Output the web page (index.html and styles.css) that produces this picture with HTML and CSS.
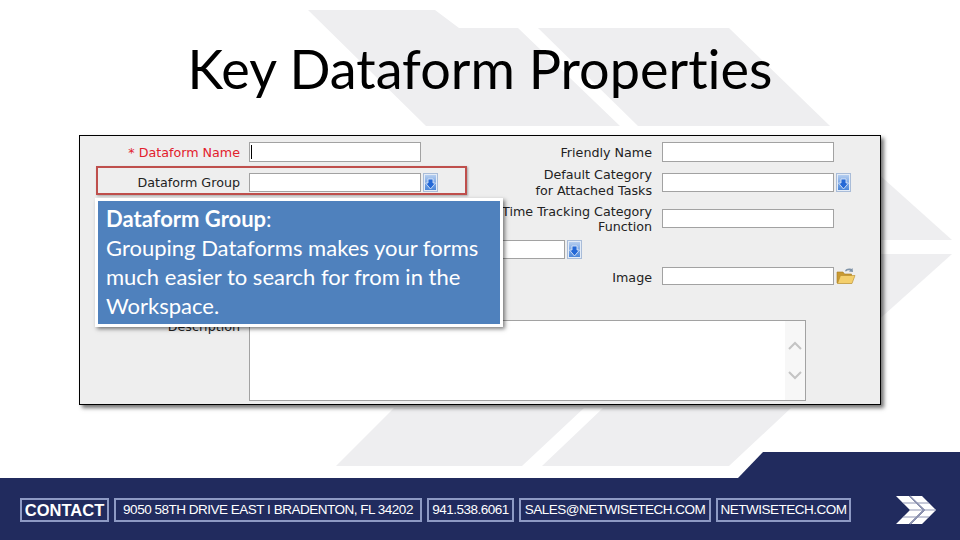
FILE: index.html
```html
<!DOCTYPE html>
<html lang="en">
<head>
  <meta charset="UTF-8">
  <title>Key Dataform Properties</title>
  <link rel="stylesheet" href="styles.css">
</head>
<body>
  <svg class="icon-defs" width="0" height="0">
    <defs>
      <linearGradient id="lookup-fill" x1="0" y1="0" x2="0" y2="1">
        <stop offset="0" stop-color="#b4cdef"/>
        <stop offset="1" stop-color="#4a86da"/>
      </linearGradient>
      <symbol id="lookup-icon" viewBox="0 0 15 19">
        <rect x="0.5" y="0.5" width="14" height="18" fill="#e4ecf7" stroke="#a9bcd8"/>
        <rect x="2" y="2" width="11" height="15" fill="url(#lookup-fill)"/>
        <path d="M5 6h5v4h2.500l-5 6-5-6h2.500z" fill="#2468d6" stroke="#e8f0fb" stroke-width="0.8"/>
      </symbol>
    </defs>
  </svg>

  <div class="slide">
    <!-- faded chevrons behind the slide -->
    <svg class="bg-shapes" width="960" height="540" viewBox="0 0 960 540">
      <polygon points="308,10 435,10 459,28 518,28 620,126 426,126"/>
      <polygon points="538,28 729,28 830,126 638,126"/>
      <polygon points="875,171 952,240 875,240"/>
      <polygon points="875,254 952,254 875,323"/>
      <polygon points="394,408 584,408 522,466 336,466"/>
      <polygon points="603,408 791,408 729,466 542,466"/>
    </svg>

    <h1 class="title">Key Dataform Properties</h1>

    <div class="card">
      <div class="form-row">
        <label class="label required">* Dataform Name</label>
        <div class="field"><input class="text-input" type="text"><span class="caret"></span></div>
        <label class="label">Friendly Name</label>
        <div class="field right"><input class="text-input" type="text"></div>
      </div>

      <div class="form-row row-group">
        <label class="label">Dataform Group</label>
        <div class="field">
          <input class="text-input" type="text">
          <svg class="lookup" width="15" height="19"><use href="#lookup-icon"/></svg>
        </div>
        <label class="label label-tall">Default Category<br>for Attached Tasks</label>
        <div class="field right">
          <input class="text-input" type="text">
          <svg class="lookup" width="15" height="19"><use href="#lookup-icon"/></svg>
        </div>
      </div>

      <div class="form-row row-time">
        <span></span>
        <span></span>
        <label class="label">Time Tracking Category<br>Function</label>
        <div class="field right"><input class="text-input" type="text"></div>
      </div>

      <div class="form-row row-wide">
        <span></span>
        <div class="field wide">
          <input class="text-input" type="text">
          <svg class="lookup" width="15" height="19"><use href="#lookup-icon"/></svg>
        </div>
      </div>

      <div class="form-row row-image">
        <span></span>
        <span></span>
        <label class="label">Image</label>
        <div class="field right">
          <input class="text-input" type="text">
          <svg class="folder" width="20" height="18" viewBox="0 0 20 18">
            <path d="M9 4c1-2.500 4-3 6.500-2l1-1 .5 4-4-.5 1-1c-1.500-.5-3 0-4 1z" fill="#7f93a8"/>
            <path d="M1 16V5h6l1.500 2h7v9z" fill="#c99a32" stroke="#a87e24" stroke-width="0.6"/>
            <path d="M1.500 16.500l3-8h14.500l-3 8z" fill="#f4cf6c" stroke="#b68b2c" stroke-width="0.6"/>
          </svg>
        </div>
      </div>

      <div class="form-row row-desc">
        <label class="label">Description</label>
        <div class="desc-box">
          <div class="scroll-track">
            <svg width="20" height="50" viewBox="0 0 20 50">
              <path d="M4 14l6-6 6 6M4 37l6 6 6-6" fill="none" stroke="#c4c4c4" stroke-width="2"/>
            </svg>
          </div>
        </div>
      </div>

      <div class="highlight"></div>

      <div class="callout">
        <p class="callout-text"><b>Dataform Group</b>:<br>Grouping Dataforms makes your forms much easier to search for from in the Workspace.</p>
      </div>
    </div>

    <footer class="footer">
      <div class="contact-list">
        <span class="contact-box contact-head">CONTACT</span>
        <span class="contact-box box-address">9050 58TH DRIVE EAST I BRADENTON, FL 34202</span>
        <span class="contact-box box-phone">941.538.6061</span>
        <span class="contact-box box-mail">SALES@NETWISETECH.COM</span>
        <span class="contact-box box-web">NETWISETECH.COM</span>
      </div>
      <svg class="logo" width="40" height="30" viewBox="0 0 40 30">
        <polygon points="0,1 13,1 27,15 13,29 0,29 14,15" fill="#fff"/>
        <polygon points="14,1 26,1 40,15 26,29 15,29 29,15" fill="#fff"/>
        <path d="M7 8H33M14 15H39M7 22H33" stroke="#8f95b3" stroke-width="1.200"/>
        <path d="M14 1L28 15L14 29" fill="none" stroke="#8f95b3" stroke-width="1.200"/>
      </svg>
    </footer>
  </div>
</body>
</html>
```

FILE: styles.css
```css
body {
  margin: 0;
  font-family: "Liberation Sans", Arial, sans-serif;
  background: #fff;
}
.icon-defs {
  position: absolute;
}
.slide {
  position: relative;
  width: 960px;
  height: 540px;
  overflow: hidden;
  display: flex;
  flex-direction: column;
  background: #fff;
}
.bg-shapes {
  position: absolute;
  top: 0;
  left: 0;
}
.bg-shapes polygon {
  fill: #eeeef0;
}
.title {
  position: relative;
  margin: 0;
  height: 135px;
  padding-top: 37px;
  box-sizing: border-box;
  font-family: Lato, sans-serif;
  font-weight: 400;
  font-size: 54px;
  font-variant-ligatures: none;
  line-height: 64px;
  text-align: center;
  color: #000;
}

/* form card */
.card {
  position: relative;
  box-sizing: border-box;
  width: 802px;
  height: 270px;
  margin-left: 79px;
  padding-top: 6px;
  background: #eeeeee;
  border: 1px solid #000;
  box-shadow: 3px 3px 4px rgba(0, 0, 0, 0.55);
  font-family: "DejaVu Sans", sans-serif;
  font-size: 12.7px;
  color: #222;
}
.form-row {
  display: grid;
  grid-template-columns: 160px 201px 211px 1fr;
  grid-template-rows: 100%;
  align-items: center;
  height: 20px;
  margin-bottom: 11px;
}
.row-group { height: 19px; margin-bottom: 17px; }
.row-time { height: 19px; margin-bottom: 12px; }
.row-wide { height: 19px; margin-bottom: 8px; }
.row-image { height: 18px; margin-bottom: 35px; }
.row-desc { height: 81px; align-items: start; margin-bottom: 0; }
.label {
  text-align: right;
  line-height: 15px;
  white-space: nowrap;
}
.label-tall { line-height: 16px; }
.row-image .label { padding-top: 2px; }
.row-desc .label { margin-top: -1px; }
.required { color: #e2202c; }
.field {
  position: relative;
  display: flex;
  align-items: center;
  gap: 2px;
  height: 100%;
  margin-left: 9px;
}
.field.right { margin-left: 10px; }
.text-input {
  box-sizing: border-box;
  flex: none;
  width: 172px;
  height: 100%;
  margin: 0;
  padding: 0;
  background: #fff;
  border: 1px solid #a2a2a2;
  border-radius: 0;
}
.wide { grid-column: 2 / 4; }
.wide .text-input { width: 316px; }
.caret {
  position: absolute;
  left: 2px;
  top: 3px;
  width: 1px;
  height: 14px;
  background: #000;
}
.lookup, .folder { flex: none; }
.desc-box {
  grid-column: 2 / 4;
  box-sizing: border-box;
  display: flex;
  justify-content: flex-end;
  width: 557px;
  height: 81px;
  margin-left: 9px;
  background: #fff;
  border: 1px solid #a2a2a2;
}
.scroll-track {
  width: 20px;
  padding-top: 14px;
  background: #f7f7f7;
}

/* annotation on top of the form */
.highlight {
  position: absolute;
  left: 16px;
  top: 30px;
  width: 371px;
  height: 29px;
  box-sizing: border-box;
  border: 2px solid #bf4f4c;
  box-shadow: 1px 1px 2px rgba(0, 0, 0, 0.3);
}
.callout {
  position: absolute;
  left: 15px;
  top: 62px;
  box-sizing: border-box;
  width: 408px;
  height: 129px;
  padding: 3px;
  background: #fff;
  box-shadow: 2px 2px 4px rgba(0, 0, 0, 0.5);
}
.callout-text {
  box-sizing: border-box;
  height: 100%;
  margin: 0;
  padding: 3px 8px;
  background: #4f81bd;
  color: #fff;
  font-family: Lato, sans-serif;
  font-size: 22px;
  line-height: 29px;
}

/* footer */
.footer {
  position: absolute;
  left: 0;
  right: 0;
  bottom: 0;
  height: 62px;
  box-sizing: border-box;
  padding: 20px 24px 0 20px;
  display: flex;
  justify-content: space-between;
  align-items: flex-start;
  background: #212b5e;
  color: #fff;
}
.footer::before {
  content: "";
  position: absolute;
  left: 738px;
  right: 0;
  top: -26px;
  height: 26px;
  background: #212b5e;
  clip-path: polygon(25px 0, 100% 0, 100% 100%, 0 100%);
}
.contact-list {
  display: flex;
  gap: 5px;
}
.contact-box {
  box-sizing: border-box;
  height: 24px;
  border: 2px solid #8e9ac4;
  font-size: 13.5px;
  line-height: 20px;
  text-align: center;
  white-space: nowrap;
  letter-spacing: -0.49px;
}
.contact-head { width: 89px; font-size: 16.5px; font-weight: 700; letter-spacing: 0; }
.box-address { width: 308px; }
.box-phone { width: 87px; }
.box-mail { width: 192px; }
.box-web { width: 135px; }
.logo { margin-top: -3px; }
```
